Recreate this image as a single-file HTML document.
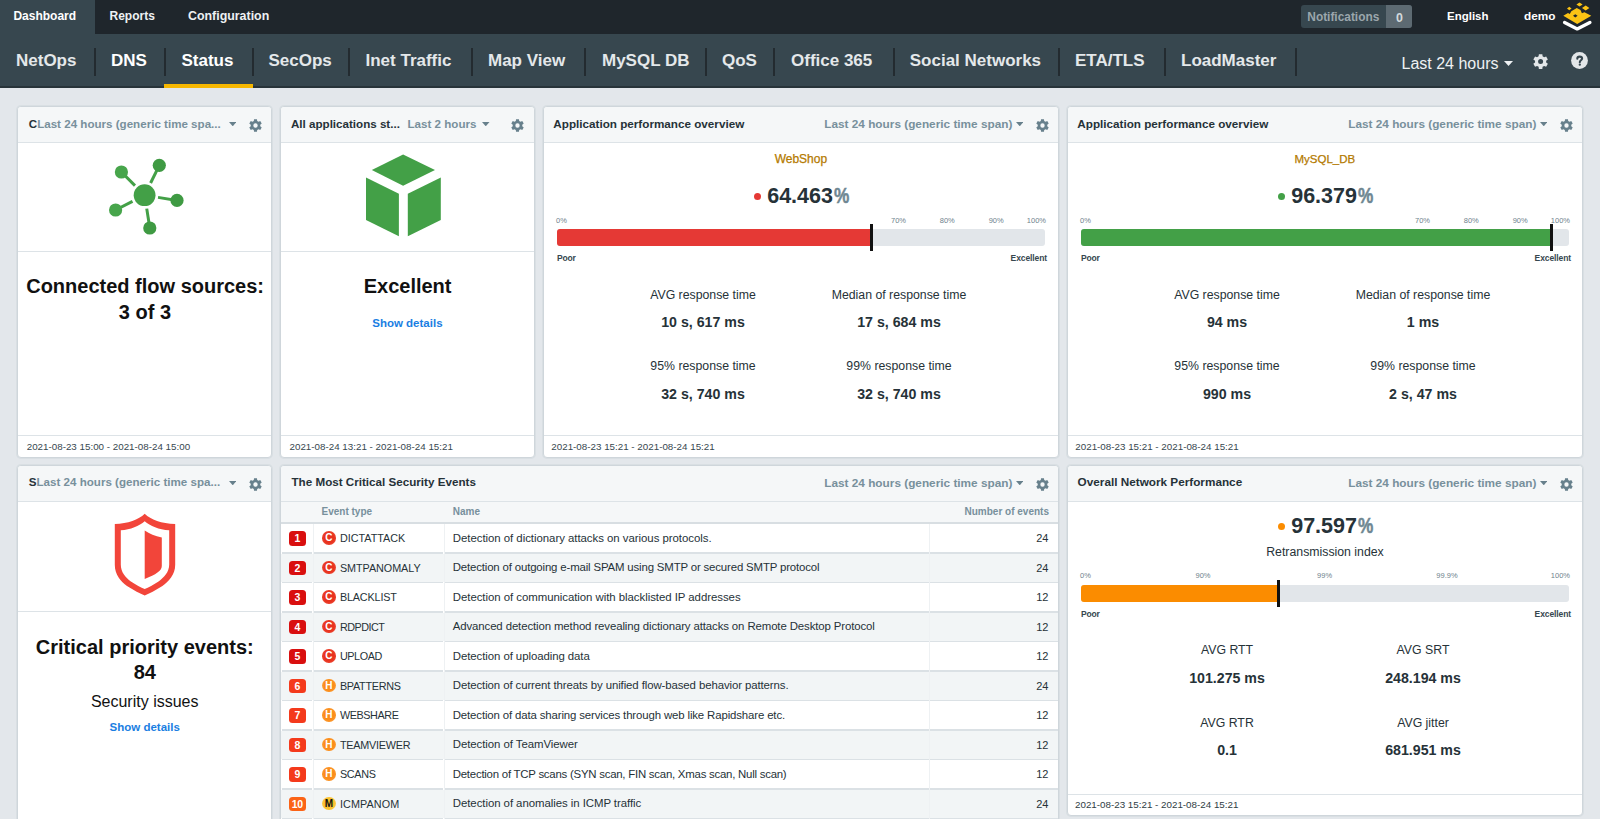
<!DOCTYPE html><html><head><meta charset="utf-8"><style>
html,body{margin:0;padding:0;width:1600px;height:819px;overflow:hidden;background:#e3e7eb;font-family:"Liberation Sans", sans-serif}
.t{position:absolute;white-space:nowrap}
.r{position:absolute}
.p{position:absolute;box-sizing:border-box;border:1px solid #cfd6db;border-radius:4px;background:#fff;overflow:hidden;box-shadow:0 0 0 1px rgba(205,212,218,0.45)}
</style></head><body>
<div class="r" style="left:0px;top:0px;width:1600px;height:34px;background:#1f262c;"></div>
<div class="r" style="left:0px;top:0px;width:95px;height:34px;background:#37474f;"></div>
<div class="t" style="left:13.40px;top:9.85px;font-size:12px;line-height:12px;font-weight:700;color:#ffffff;">Dashboard</div>
<div class="t" style="left:109.50px;top:9.85px;font-size:12px;line-height:12px;font-weight:700;color:#eef1f3;">Reports</div>
<div class="t" style="left:188.00px;top:9.51px;font-size:12.4px;line-height:12.4px;font-weight:700;color:#eef1f3;">Configuration</div>
<div class="r" style="left:1301px;top:5px;width:111px;height:23px;background:#37474f;border-radius:3px;overflow:hidden"><div style="position:absolute;left:85px;top:0;width:26px;height:23px;background:#5d6a72"></div></div>
<div class="t" style="left:1307.30px;top:12.03px;font-size:11.9px;line-height:11.9px;font-weight:700;color:#9ba6ac;">Notifications</div>
<div class="t" style="left:1389.50px;width:20px;text-align:center;top:11.81px;font-size:12.4px;line-height:12.4px;font-weight:700;color:#d3d9dc;">0</div>
<div class="t" style="left:1447.00px;top:11.07px;font-size:11.5px;line-height:11.5px;font-weight:700;color:#ffffff;">English</div>
<div class="t" style="left:1524.00px;top:10.82px;font-size:11.8px;line-height:11.8px;font-weight:700;color:#ffffff;">demo</div>
<svg class="r" style="left:1556px;top:0px" width="44" height="34" viewBox="0 0 44 34">
<path d="M8.6,22.6 L21.2,28.9 L33.9,22.6" fill="none" stroke="#ffffff" stroke-width="3.4" stroke-linejoin="round" stroke-linecap="round"/>
<path fill="#fbc314" fill-rule="evenodd" d="M7.3,15.8 L12.0,13.0 L13.8,14.1 L15.3,11.3 L20.8,7.9 L24.5,9.9 L25.9,13.3 L28.4,12.2 L35.3,15.8 L21.2,23.9 Z M17.0,15.8 L19.3,14.2 L21.6,15.8 L19.3,17.4 Z"/>
<path fill="#fbc314" d="M11.0,8.5 L13.3,6.8 L15.6,8.5 L13.3,10.2 Z M20.4,4.5 L23.5,2.5 L26.6,4.5 L23.5,6.6 Z M26.0,8.0 L29.7,5.4 L33.4,8.0 L29.7,10.6 Z"/>
</svg>
<div class="r" style="left:0px;top:34px;width:1600px;height:54px;background:#37474f;"></div>
<div class="r" style="left:0px;top:86px;width:1600px;height:2px;background:#28343a;"></div>
<div class="t" style="left:16.00px;top:52.12px;font-size:17px;line-height:17px;font-weight:700;color:#e4e8ea;">NetOps</div>
<div class="t" style="left:111.00px;top:52.12px;font-size:17px;line-height:17px;font-weight:700;color:#ffffff;">DNS</div>
<div class="t" style="left:181.50px;top:52.12px;font-size:17px;line-height:17px;font-weight:700;color:#ffffff;">Status</div>
<div class="t" style="left:268.50px;top:52.12px;font-size:17px;line-height:17px;font-weight:700;color:#e4e8ea;">SecOps</div>
<div class="t" style="left:365.50px;top:52.12px;font-size:17px;line-height:17px;font-weight:700;color:#e4e8ea;">Inet Traffic</div>
<div class="t" style="left:488.00px;top:52.12px;font-size:17px;line-height:17px;font-weight:700;color:#e4e8ea;">Map View</div>
<div class="t" style="left:602.00px;top:52.12px;font-size:17px;line-height:17px;font-weight:700;color:#e4e8ea;">MySQL DB</div>
<div class="t" style="left:722.00px;top:52.12px;font-size:17px;line-height:17px;font-weight:700;color:#e4e8ea;">QoS</div>
<div class="t" style="left:791.00px;top:52.12px;font-size:17px;line-height:17px;font-weight:700;color:#e4e8ea;">Office 365</div>
<div class="t" style="left:909.75px;top:52.12px;font-size:17px;line-height:17px;font-weight:700;color:#e4e8ea;">Social Networks</div>
<div class="t" style="left:1075.00px;top:52.12px;font-size:17px;line-height:17px;font-weight:700;color:#e4e8ea;">ETA/TLS</div>
<div class="t" style="left:1181.00px;top:52.12px;font-size:17px;line-height:17px;font-weight:700;color:#e4e8ea;">LoadMaster</div>
<div class="r" style="left:94px;top:48px;width:2px;height:28px;background:#232b30;"></div>
<div class="r" style="left:164px;top:48px;width:2px;height:28px;background:#232b30;"></div>
<div class="r" style="left:252px;top:48px;width:2px;height:28px;background:#232b30;"></div>
<div class="r" style="left:348px;top:48px;width:2px;height:28px;background:#232b30;"></div>
<div class="r" style="left:471px;top:48px;width:2px;height:28px;background:#232b30;"></div>
<div class="r" style="left:584px;top:48px;width:2px;height:28px;background:#232b30;"></div>
<div class="r" style="left:705px;top:48px;width:2px;height:28px;background:#232b30;"></div>
<div class="r" style="left:773px;top:48px;width:2px;height:28px;background:#232b30;"></div>
<div class="r" style="left:893px;top:48px;width:2px;height:28px;background:#232b30;"></div>
<div class="r" style="left:1058px;top:48px;width:2px;height:28px;background:#232b30;"></div>
<div class="r" style="left:1164px;top:48px;width:2px;height:28px;background:#232b30;"></div>
<div class="r" style="left:1295px;top:48px;width:2px;height:28px;background:#232b30;"></div>
<div class="r" style="left:164px;top:84px;width:89px;height:4px;background:#f6b700;"></div>
<div class="t" style="left:1401.50px;top:55.96px;font-size:16px;line-height:16px;font-weight:400;color:#eef1f3;">Last 24 hours</div>
<svg class="r" style="left:1503.50px;top:60.50px" width="9" height="5"><path fill="#eef1f3" d="M0,0 L9,0 L4.5,5 Z"/></svg>
<svg class="r" style="left:1530.90px;top:52.40px" width="19.20" height="19.20"><path fill="#e3e7e9" fill-rule="evenodd" d="M7.62,4.34 L7.87,2.20 L11.33,2.20 L11.58,4.34 L13.17,5.25 L15.14,4.40 L16.87,7.40 L15.15,8.68 L15.15,10.52 L16.87,11.80 L15.14,14.80 L13.17,13.95 L11.58,14.86 L11.33,17.00 L7.87,17.00 L7.62,14.86 L6.03,13.95 L4.06,14.80 L2.33,11.80 L4.05,10.52 L4.05,8.68 L2.33,7.40 L4.06,4.40 L6.03,5.25 Z M7.09,9.60 a2.51,2.51 0 1,0 5.02,0 a2.51,2.51 0 1,0 -5.02,0 Z"/></svg>
<svg class="r" style="left:1570px;top:51px" width="19" height="19" viewBox="0 0 19 19"><circle cx="9.5" cy="9.5" r="8.4" fill="#e3e7e9"/><path d="M7.3,7.7 C7.3,6.3 8.4,5.6 9.7,5.6 C11.1,5.6 12.1,6.4 12.1,7.6 C12.1,9.2 9.8,9.3 9.8,11.2" fill="none" stroke="#37474f" stroke-width="2.1" stroke-linecap="round"/><circle cx="9.8" cy="13.7" r="1.15" fill="#37474f"/></svg>
<div class="p" style="left:17px;top:106px;width:255px;height:352px"></div>
<div class="r" style="left:18px;top:107px;width:253px;height:35px;background:#f5f7f8;border-radius:3px 3px 0 0"></div>
<div class="r" style="left:18px;top:142px;width:253px;height:1px;background:#dde3e7;"></div>
<div class="r" style="left:18px;top:435px;width:253px;height:1px;background:#dde3e7;"></div>
<div class="p" style="left:280px;top:106px;width:255px;height:352px"></div>
<div class="r" style="left:281px;top:107px;width:253px;height:35px;background:#f5f7f8;border-radius:3px 3px 0 0"></div>
<div class="r" style="left:281px;top:142px;width:253px;height:1px;background:#dde3e7;"></div>
<div class="r" style="left:281px;top:435px;width:253px;height:1px;background:#dde3e7;"></div>
<div class="p" style="left:543px;top:106px;width:516px;height:352px"></div>
<div class="r" style="left:544px;top:107px;width:514px;height:35px;background:#f5f7f8;border-radius:3px 3px 0 0"></div>
<div class="r" style="left:544px;top:142px;width:514px;height:1px;background:#dde3e7;"></div>
<div class="r" style="left:544px;top:435px;width:514px;height:1px;background:#dde3e7;"></div>
<div class="p" style="left:1067px;top:106px;width:516px;height:352px"></div>
<div class="r" style="left:1068px;top:107px;width:514px;height:35px;background:#f5f7f8;border-radius:3px 3px 0 0"></div>
<div class="r" style="left:1068px;top:142px;width:514px;height:1px;background:#dde3e7;"></div>
<div class="r" style="left:1068px;top:435px;width:514px;height:1px;background:#dde3e7;"></div>
<div class="p" style="left:17px;top:465px;width:255px;height:360px"></div>
<div class="r" style="left:18px;top:466px;width:253px;height:35px;background:#f5f7f8;border-radius:3px 3px 0 0"></div>
<div class="r" style="left:18px;top:501px;width:253px;height:1px;background:#dde3e7;"></div>
<div class="p" style="left:280px;top:465px;width:779px;height:360px"></div>
<div class="r" style="left:281px;top:466px;width:777px;height:35px;background:#f5f7f8;border-radius:3px 3px 0 0"></div>
<div class="r" style="left:281px;top:501px;width:777px;height:1px;background:#dde3e7;"></div>
<div class="p" style="left:1067px;top:465px;width:516px;height:351px"></div>
<div class="r" style="left:1068px;top:466px;width:514px;height:35px;background:#f5f7f8;border-radius:3px 3px 0 0"></div>
<div class="r" style="left:1068px;top:501px;width:514px;height:1px;background:#dde3e7;"></div>
<div class="r" style="left:1068px;top:794px;width:514px;height:1px;background:#dde3e7;"></div>
<div class="t" style="left:28.75px;top:117.99px;font-size:11.6px;line-height:11.6px;font-weight:700;color:#78909c;"><span style="color:#263238">C</span>Last 24 hours (generic time spa...</div>
<div class="t" style="left:-74.60px;width:300px;text-align:right;top:119.02px;font-size:11.8px;line-height:11.8px;font-weight:700;color:#78909c;"></div>
<svg class="r" style="left:228.75px;top:121.85px" width="7.5" height="4.3"><path fill="#67808c" d="M0,0 L7.5,0 L3.75,4.3 Z"/></svg>
<svg class="r" style="left:247.10px;top:116.70px" width="17.00" height="17.00"><path fill="#67808c" fill-rule="evenodd" d="M6.81,4.00 L7.02,2.17 L9.98,2.17 L10.19,4.00 L11.55,4.78 L13.24,4.05 L14.72,6.62 L13.25,7.72 L13.25,9.28 L14.72,10.38 L13.24,12.95 L11.55,12.22 L10.19,13.00 L9.98,14.83 L7.02,14.83 L6.81,13.00 L5.45,12.22 L3.76,12.95 L2.28,10.38 L3.75,9.28 L3.75,7.72 L2.28,6.62 L3.76,4.05 L5.45,4.78 Z M6.36,8.50 a2.15,2.15 0 1,0 4.29,0 a2.15,2.15 0 1,0 -4.29,0 Z"/></svg>
<div class="r" style="left:18px;top:251px;width:253px;height:1px;background:#dde3e7;"></div>
<svg class="r" style="left:100px;top:150px" width="90" height="90" viewBox="100 150 90 90">
<g stroke="#43a047" stroke-width="3" stroke-linecap="butt">
<line x1="134.98" y1="185.58" x2="121.40" y2="172.00"/>
<line x1="150.60" y1="183.00" x2="159.30" y2="165.30"/>
<line x1="158.03" y1="197.36" x2="177.00" y2="200.40"/>
<line x1="146.73" y1="208.63" x2="149.80" y2="228.00"/>
<line x1="132.49" y1="201.38" x2="115.60" y2="210.00"/>
</g>
<circle cx="144.6" cy="195.2" r="10.9" fill="#43a047"/>
<circle cx="121.4" cy="172.0" r="6.6" fill="#47a54b"/>
<circle cx="159.3" cy="165.3" r="6.6" fill="#3f9a43"/>
<circle cx="177.0" cy="200.4" r="6.6" fill="#3f9a43"/>
<circle cx="149.8" cy="228.0" r="6.6" fill="#3f9a43"/>
<circle cx="115.6" cy="210.0" r="6.6" fill="#47a54b"/>
</svg>
<div class="t" style="left:20.10px;width:250px;text-align:center;top:276.08px;font-size:20px;line-height:20px;font-weight:700;color:#111111;">Connected flow sources:</div>
<div class="t" style="left:19.90px;width:250px;text-align:center;top:301.58px;font-size:20px;line-height:20px;font-weight:700;color:#111111;">3 of 3</div>
<div class="t" style="left:26.70px;top:442.01px;font-size:9.8px;line-height:9.8px;font-weight:400;color:#37474f;">2021-08-23 15:00 - 2021-08-24 15:00</div>
<div class="t" style="left:291.00px;top:117.99px;font-size:11.6px;line-height:11.6px;font-weight:700;color:#263238;">All applications st...</div>
<div class="t" style="left:407.50px;top:117.99px;font-size:11.6px;line-height:11.6px;font-weight:700;color:#78909c;">Last 2 hours</div>
<svg class="r" style="left:482.15px;top:121.85px" width="7.5" height="4.3"><path fill="#67808c" d="M0,0 L7.5,0 L3.75,4.3 Z"/></svg>
<svg class="r" style="left:509.30px;top:116.70px" width="17.00" height="17.00"><path fill="#67808c" fill-rule="evenodd" d="M6.81,4.00 L7.02,2.17 L9.98,2.17 L10.19,4.00 L11.55,4.78 L13.24,4.05 L14.72,6.62 L13.25,7.72 L13.25,9.28 L14.72,10.38 L13.24,12.95 L11.55,12.22 L10.19,13.00 L9.98,14.83 L7.02,14.83 L6.81,13.00 L5.45,12.22 L3.76,12.95 L2.28,10.38 L3.75,9.28 L3.75,7.72 L2.28,6.62 L3.76,4.05 L5.45,4.78 Z M6.36,8.50 a2.15,2.15 0 1,0 4.29,0 a2.15,2.15 0 1,0 -4.29,0 Z"/></svg>
<div class="r" style="left:281px;top:251px;width:253px;height:1px;background:#dde3e7;"></div>
<svg class="r" style="left:360px;top:150px" width="90" height="90" viewBox="360 150 90 90">
<g fill="#43a047">
<polygon points="403.1,154.4 435,170 403.1,185.7 371.8,170"/>
<polygon points="366,177.6 398.9,193.8 398.9,236.2 366,219.9"/>
<polygon points="407.8,193.8 440.8,177.6 440.8,219.9 407.8,236.2"/>
</g></svg>
<div class="t" style="left:307.60px;width:200px;text-align:center;top:276.38px;font-size:20px;line-height:20px;font-weight:700;color:#111111;">Excellent</div>
<div class="t" style="left:307.40px;width:200px;text-align:center;top:318.27px;font-size:11.5px;line-height:11.5px;font-weight:700;color:#1a7ee2;">Show details</div>
<div class="t" style="left:289.50px;top:442.01px;font-size:9.8px;line-height:9.8px;font-weight:400;color:#37474f;">2021-08-24 13:21 - 2021-08-24 15:21</div>
<div class="t" style="left:553.30px;top:117.90px;font-size:11.7px;line-height:11.7px;font-weight:700;color:#263238;">Application performance overview</div>
<div class="t" style="left:712.40px;width:300px;text-align:right;top:119.02px;font-size:11.8px;line-height:11.8px;font-weight:700;color:#78909c;">Last 24 hours (generic time span)</div>
<svg class="r" style="left:1015.75px;top:121.85px" width="7.5" height="4.3"><path fill="#67808c" d="M0,0 L7.5,0 L3.75,4.3 Z"/></svg>
<svg class="r" style="left:1034.10px;top:116.70px" width="17.00" height="17.00"><path fill="#67808c" fill-rule="evenodd" d="M6.81,4.00 L7.02,2.17 L9.98,2.17 L10.19,4.00 L11.55,4.78 L13.24,4.05 L14.72,6.62 L13.25,7.72 L13.25,9.28 L14.72,10.38 L13.24,12.95 L11.55,12.22 L10.19,13.00 L9.98,14.83 L7.02,14.83 L6.81,13.00 L5.45,12.22 L3.76,12.95 L2.28,10.38 L3.75,9.28 L3.75,7.72 L2.28,6.62 L3.76,4.05 L5.45,4.78 Z M6.36,8.50 a2.15,2.15 0 1,0 4.29,0 a2.15,2.15 0 1,0 -4.29,0 Z"/></svg>
<div class="t" style="left:700.90px;width:200px;text-align:center;top:153.25px;font-size:12px;line-height:12px;font-weight:400;color:#b47a00;-webkit-text-stroke:0.25px #b47a00">WebShop</div>
<div class="r" style="left:753.5px;top:192.5px;width:7px;height:7px;border-radius:50%;background:#e53935"></div>
<div class="t" style="left:767.20px;top:186.31px;font-size:21.5px;line-height:21.5px;font-weight:700;color:#263238;">64.463<span style="font-weight:700;color:#6f8792;display:inline-block;transform:scaleX(0.8);transform-origin:0 0;-webkit-text-stroke:0.5px #6f8792;margin-left:1px">%</span></div>
<div class="t" style="left:556.00px;top:217.16px;font-size:7.5px;line-height:7.5px;font-weight:400;color:#6e828c;">0%</div>
<div class="t" style="left:878.50px;width:40px;text-align:center;top:217.16px;font-size:7.5px;line-height:7.5px;font-weight:400;color:#6e828c;">70%</div>
<div class="t" style="left:927.30px;width:40px;text-align:center;top:217.16px;font-size:7.5px;line-height:7.5px;font-weight:400;color:#6e828c;">80%</div>
<div class="t" style="left:976.20px;width:40px;text-align:center;top:217.16px;font-size:7.5px;line-height:7.5px;font-weight:400;color:#6e828c;">90%</div>
<div class="t" style="left:1006.00px;width:40px;text-align:right;top:217.16px;font-size:7.5px;line-height:7.5px;font-weight:400;color:#6e828c;">100%</div>
<div class="r" style="left:557px;top:229px;width:488px;height:17px;border-radius:3px;background:#e2e6ea;overflow:hidden"><div style="position:absolute;left:0;top:0;bottom:0;width:314.20000000000005px;background:#e53935"></div></div>
<div class="r" style="left:869.7px;top:224px;width:3px;height:27px;background:#111111;"></div>
<div class="t" style="left:556.90px;top:253.71px;font-size:8.5px;line-height:8.5px;font-weight:700;color:#37474f;letter-spacing:-0.15px">Poor</div>
<div class="t" style="left:967.00px;width:80px;text-align:right;top:253.81px;font-size:8.5px;line-height:8.5px;font-weight:700;color:#37474f;letter-spacing:-0.1px">Excellent</div>
<div class="t" style="left:608.00px;width:190px;text-align:center;top:288.69px;font-size:12.3px;line-height:12.3px;font-weight:400;color:#263238;">AVG response time</div>
<div class="t" style="left:804.00px;width:190px;text-align:center;top:288.69px;font-size:12.3px;line-height:12.3px;font-weight:400;color:#263238;">Median of response time</div>
<div class="t" style="left:608.00px;width:190px;text-align:center;top:315.29px;font-size:14.2px;line-height:14.2px;font-weight:700;color:#263238;">10 s, 617 ms</div>
<div class="t" style="left:804.00px;width:190px;text-align:center;top:315.29px;font-size:14.2px;line-height:14.2px;font-weight:700;color:#263238;">17 s, 684 ms</div>
<div class="t" style="left:608.00px;width:190px;text-align:center;top:359.99px;font-size:12.3px;line-height:12.3px;font-weight:400;color:#263238;">95% response time</div>
<div class="t" style="left:804.00px;width:190px;text-align:center;top:359.99px;font-size:12.3px;line-height:12.3px;font-weight:400;color:#263238;">99% response time</div>
<div class="t" style="left:608.00px;width:190px;text-align:center;top:387.19px;font-size:14.2px;line-height:14.2px;font-weight:700;color:#263238;">32 s, 740 ms</div>
<div class="t" style="left:804.00px;width:190px;text-align:center;top:387.19px;font-size:14.2px;line-height:14.2px;font-weight:700;color:#263238;">32 s, 740 ms</div>
<div class="t" style="left:551.30px;top:442.01px;font-size:9.8px;line-height:9.8px;font-weight:400;color:#37474f;">2021-08-23 15:21 - 2021-08-24 15:21</div>
<div class="t" style="left:1077.30px;top:117.90px;font-size:11.7px;line-height:11.7px;font-weight:700;color:#263238;">Application performance overview</div>
<div class="t" style="left:1236.40px;width:300px;text-align:right;top:119.02px;font-size:11.8px;line-height:11.8px;font-weight:700;color:#78909c;">Last 24 hours (generic time span)</div>
<svg class="r" style="left:1539.75px;top:121.85px" width="7.5" height="4.3"><path fill="#67808c" d="M0,0 L7.5,0 L3.75,4.3 Z"/></svg>
<svg class="r" style="left:1558.10px;top:116.70px" width="17.00" height="17.00"><path fill="#67808c" fill-rule="evenodd" d="M6.81,4.00 L7.02,2.17 L9.98,2.17 L10.19,4.00 L11.55,4.78 L13.24,4.05 L14.72,6.62 L13.25,7.72 L13.25,9.28 L14.72,10.38 L13.24,12.95 L11.55,12.22 L10.19,13.00 L9.98,14.83 L7.02,14.83 L6.81,13.00 L5.45,12.22 L3.76,12.95 L2.28,10.38 L3.75,9.28 L3.75,7.72 L2.28,6.62 L3.76,4.05 L5.45,4.78 Z M6.36,8.50 a2.15,2.15 0 1,0 4.29,0 a2.15,2.15 0 1,0 -4.29,0 Z"/></svg>
<div class="t" style="left:1224.90px;width:200px;text-align:center;top:153.67px;font-size:11.5px;line-height:11.5px;font-weight:400;color:#b47a00;-webkit-text-stroke:0.25px #b47a00">MySQL_DB</div>
<div class="r" style="left:1277.5px;top:192.5px;width:7px;height:7px;border-radius:50%;background:#43a047"></div>
<div class="t" style="left:1291.20px;top:186.31px;font-size:21.5px;line-height:21.5px;font-weight:700;color:#263238;">96.379<span style="font-weight:700;color:#6f8792;display:inline-block;transform:scaleX(0.8);transform-origin:0 0;-webkit-text-stroke:0.5px #6f8792;margin-left:1px">%</span></div>
<div class="t" style="left:1080.00px;top:217.16px;font-size:7.5px;line-height:7.5px;font-weight:400;color:#6e828c;">0%</div>
<div class="t" style="left:1402.50px;width:40px;text-align:center;top:217.16px;font-size:7.5px;line-height:7.5px;font-weight:400;color:#6e828c;">70%</div>
<div class="t" style="left:1451.30px;width:40px;text-align:center;top:217.16px;font-size:7.5px;line-height:7.5px;font-weight:400;color:#6e828c;">80%</div>
<div class="t" style="left:1500.20px;width:40px;text-align:center;top:217.16px;font-size:7.5px;line-height:7.5px;font-weight:400;color:#6e828c;">90%</div>
<div class="t" style="left:1530.00px;width:40px;text-align:right;top:217.16px;font-size:7.5px;line-height:7.5px;font-weight:400;color:#6e828c;">100%</div>
<div class="r" style="left:1081px;top:229px;width:488px;height:17px;border-radius:3px;background:#e2e6ea;overflow:hidden"><div style="position:absolute;left:0;top:0;bottom:0;width:470px;background:#43a047"></div></div>
<div class="r" style="left:1549.5px;top:224px;width:3px;height:27px;background:#111111;"></div>
<div class="t" style="left:1080.90px;top:253.71px;font-size:8.5px;line-height:8.5px;font-weight:700;color:#37474f;letter-spacing:-0.15px">Poor</div>
<div class="t" style="left:1491.00px;width:80px;text-align:right;top:253.81px;font-size:8.5px;line-height:8.5px;font-weight:700;color:#37474f;letter-spacing:-0.1px">Excellent</div>
<div class="t" style="left:1132.00px;width:190px;text-align:center;top:288.69px;font-size:12.3px;line-height:12.3px;font-weight:400;color:#263238;">AVG response time</div>
<div class="t" style="left:1328.00px;width:190px;text-align:center;top:288.69px;font-size:12.3px;line-height:12.3px;font-weight:400;color:#263238;">Median of response time</div>
<div class="t" style="left:1132.00px;width:190px;text-align:center;top:315.29px;font-size:14.2px;line-height:14.2px;font-weight:700;color:#263238;">94 ms</div>
<div class="t" style="left:1328.00px;width:190px;text-align:center;top:315.29px;font-size:14.2px;line-height:14.2px;font-weight:700;color:#263238;">1 ms</div>
<div class="t" style="left:1132.00px;width:190px;text-align:center;top:359.99px;font-size:12.3px;line-height:12.3px;font-weight:400;color:#263238;">95% response time</div>
<div class="t" style="left:1328.00px;width:190px;text-align:center;top:359.99px;font-size:12.3px;line-height:12.3px;font-weight:400;color:#263238;">99% response time</div>
<div class="t" style="left:1132.00px;width:190px;text-align:center;top:387.19px;font-size:14.2px;line-height:14.2px;font-weight:700;color:#263238;">990 ms</div>
<div class="t" style="left:1328.00px;width:190px;text-align:center;top:387.19px;font-size:14.2px;line-height:14.2px;font-weight:700;color:#263238;">2 s, 47 ms</div>
<div class="t" style="left:1075.30px;top:442.01px;font-size:9.8px;line-height:9.8px;font-weight:400;color:#37474f;">2021-08-23 15:21 - 2021-08-24 15:21</div>
<div class="t" style="left:28.75px;top:476.09px;font-size:11.6px;line-height:11.6px;font-weight:700;color:#78909c;"><span style="color:#263238">S</span>Last 24 hours (generic time spa...</div>
<div class="t" style="left:-74.60px;width:300px;text-align:right;top:478.02px;font-size:11.8px;line-height:11.8px;font-weight:700;color:#78909c;"></div>
<svg class="r" style="left:228.75px;top:480.85px" width="7.5" height="4.3"><path fill="#67808c" d="M0,0 L7.5,0 L3.75,4.3 Z"/></svg>
<svg class="r" style="left:247.10px;top:475.70px" width="17.00" height="17.00"><path fill="#67808c" fill-rule="evenodd" d="M6.81,4.00 L7.02,2.17 L9.98,2.17 L10.19,4.00 L11.55,4.78 L13.24,4.05 L14.72,6.62 L13.25,7.72 L13.25,9.28 L14.72,10.38 L13.24,12.95 L11.55,12.22 L10.19,13.00 L9.98,14.83 L7.02,14.83 L6.81,13.00 L5.45,12.22 L3.76,12.95 L2.28,10.38 L3.75,9.28 L3.75,7.72 L2.28,6.62 L3.76,4.05 L5.45,4.78 Z M6.36,8.50 a2.15,2.15 0 1,0 4.29,0 a2.15,2.15 0 1,0 -4.29,0 Z"/></svg>
<div class="r" style="left:18px;top:611px;width:253px;height:1px;background:#dde3e7;"></div>
<svg class="r" style="left:105px;top:505px" width="80" height="100" viewBox="105 505 80 100">
<path fill="#f2453a" fill-rule="evenodd" d="M144.7,513.8 C138.5,519.8 128,523.9 114.8,523.9 L114.8,564.8 C114.8,575 121,581.5 127,586 C134,590.5 140,593.5 144.7,595.4 C149.4,593.5 155.4,590.5 162.4,586 C168.4,581.5 175.2,575 175.2,564.8 L175.2,523.9 C161.4,523.9 150.9,519.8 144.7,513.8 Z
M144.7,521.2 C139.3,526 130.5,529.6 120.8,530.2 L120.8,564.5 C120.8,572.2 125.5,577.5 130.5,581.2 C136,585 141,587.5 144.7,589 C148.4,587.5 153.4,585 158.9,581.2 C163.9,577.5 169.2,572.2 169.2,564.5 L169.2,530.2 C158.9,529.6 150.1,526 144.7,521.2 Z"/>
<path fill="#f2453a" d="M144.7,530.6 C149.5,533.8 155,536.3 161.8,537.4 L161.8,566 C161.8,570.8 156,574.5 144.7,578.9 Z"/>
</svg>
<div class="t" style="left:19.75px;width:250px;text-align:center;top:637.38px;font-size:20px;line-height:20px;font-weight:700;color:#111111;">Critical priority events:</div>
<div class="t" style="left:19.75px;width:250px;text-align:center;top:662.38px;font-size:20px;line-height:20px;font-weight:700;color:#111111;">84</div>
<div class="t" style="left:19.70px;width:250px;text-align:center;top:694.26px;font-size:16px;line-height:16px;font-weight:400;color:#111111;">Security issues</div>
<div class="t" style="left:44.70px;width:200px;text-align:center;top:721.77px;font-size:11.5px;line-height:11.5px;font-weight:700;color:#1a7ee2;">Show details</div>
<div class="t" style="left:291.50px;top:476.44px;font-size:11.65px;line-height:11.65px;font-weight:700;color:#263238;">The Most Critical Security Events</div>
<div class="t" style="left:712.40px;width:300px;text-align:right;top:478.02px;font-size:11.8px;line-height:11.8px;font-weight:700;color:#78909c;">Last 24 hours (generic time span)</div>
<svg class="r" style="left:1015.75px;top:480.85px" width="7.5" height="4.3"><path fill="#67808c" d="M0,0 L7.5,0 L3.75,4.3 Z"/></svg>
<svg class="r" style="left:1034.10px;top:475.70px" width="17.00" height="17.00"><path fill="#67808c" fill-rule="evenodd" d="M6.81,4.00 L7.02,2.17 L9.98,2.17 L10.19,4.00 L11.55,4.78 L13.24,4.05 L14.72,6.62 L13.25,7.72 L13.25,9.28 L14.72,10.38 L13.24,12.95 L11.55,12.22 L10.19,13.00 L9.98,14.83 L7.02,14.83 L6.81,13.00 L5.45,12.22 L3.76,12.95 L2.28,10.38 L3.75,9.28 L3.75,7.72 L2.28,6.62 L3.76,4.05 L5.45,4.78 Z M6.36,8.50 a2.15,2.15 0 1,0 4.29,0 a2.15,2.15 0 1,0 -4.29,0 Z"/></svg>
<div class="r" style="left:281px;top:502px;width:777px;height:21px;background:#f5f7f8;"></div>
<div class="r" style="left:281px;top:522px;width:777px;height:1.5px;background:#d8dee2;"></div>
<div class="t" style="left:321.50px;top:506.94px;font-size:10px;line-height:10px;font-weight:700;color:#78909c;">Event type</div>
<div class="t" style="left:452.75px;top:506.94px;font-size:10px;line-height:10px;font-weight:700;color:#78909c;">Name</div>
<div class="t" style="left:899.00px;width:150px;text-align:right;top:506.94px;font-size:10px;line-height:10px;font-weight:700;color:#78909c;">Number of events</div>
<div class="r" style="left:282px;top:552.00px;width:30px;height:1.5px;background:#dbe1e5"></div>
<div class="r" style="left:313px;top:552.00px;width:130px;height:1.5px;background:#dbe1e5"></div>
<div class="r" style="left:444.5px;top:552.00px;width:484px;height:1.5px;background:#dbe1e5"></div>
<div class="r" style="left:929.5px;top:552.00px;width:128.5px;height:1.5px;background:#dbe1e5"></div>
<div class="r" style="left:289px;top:531.25px;width:16.5px;height:14.5px;border-radius:3.5px;background:#d90f0f;color:#fff;font-weight:700;font-size:10.5px;line-height:14.5px;text-align:center;letter-spacing:-0.3px">1</div>
<div class="r" style="left:322.2px;top:531.25px;width:13.5px;height:13.5px;border-radius:50%;background:radial-gradient(circle, #e8321e 50%, #f2604c 100%);color:#fff;font-weight:700;font-size:10px;line-height:14px;text-align:center">C</div>
<div class="t" style="left:339.90px;top:533.36px;font-size:10.8px;line-height:10.8px;font-weight:400;color:#263238;letter-spacing:0.000px">DICTATTACK</div>
<div class="t" style="left:452.75px;top:532.83px;font-size:11.43px;line-height:11.43px;font-weight:400;color:#263238;letter-spacing:-0.040px">Detection of dictionary attacks on various protocols.</div>
<div class="t" style="left:988.40px;width:60px;text-align:right;top:533.19px;font-size:11px;line-height:11px;font-weight:400;color:#263238;">24</div>
<div class="r" style="left:281px;top:554.0px;width:777px;height:28px;background:#f2f5f6;"></div>
<div class="r" style="left:282px;top:581.50px;width:30px;height:1.5px;background:#dbe1e5"></div>
<div class="r" style="left:313px;top:581.50px;width:130px;height:1.5px;background:#dbe1e5"></div>
<div class="r" style="left:444.5px;top:581.50px;width:484px;height:1.5px;background:#dbe1e5"></div>
<div class="r" style="left:929.5px;top:581.50px;width:128.5px;height:1.5px;background:#dbe1e5"></div>
<div class="r" style="left:289px;top:560.75px;width:16.5px;height:14.5px;border-radius:3.5px;background:#d90f0f;color:#fff;font-weight:700;font-size:10.5px;line-height:14.5px;text-align:center;letter-spacing:-0.3px">2</div>
<div class="r" style="left:322.2px;top:560.75px;width:13.5px;height:13.5px;border-radius:50%;background:radial-gradient(circle, #e8321e 50%, #f2604c 100%);color:#fff;font-weight:700;font-size:10px;line-height:14px;text-align:center">C</div>
<div class="t" style="left:339.90px;top:562.86px;font-size:10.8px;line-height:10.8px;font-weight:400;color:#263238;letter-spacing:-0.050px">SMTPANOMALY</div>
<div class="t" style="left:452.75px;top:562.33px;font-size:11.43px;line-height:11.43px;font-weight:400;color:#263238;letter-spacing:-0.162px">Detection of outgoing e-mail SPAM using SMTP or secured SMTP protocol</div>
<div class="t" style="left:988.40px;width:60px;text-align:right;top:562.69px;font-size:11px;line-height:11px;font-weight:400;color:#263238;">24</div>
<div class="r" style="left:282px;top:611.00px;width:30px;height:1.5px;background:#dbe1e5"></div>
<div class="r" style="left:313px;top:611.00px;width:130px;height:1.5px;background:#dbe1e5"></div>
<div class="r" style="left:444.5px;top:611.00px;width:484px;height:1.5px;background:#dbe1e5"></div>
<div class="r" style="left:929.5px;top:611.00px;width:128.5px;height:1.5px;background:#dbe1e5"></div>
<div class="r" style="left:289px;top:590.25px;width:16.5px;height:14.5px;border-radius:3.5px;background:#d90f0f;color:#fff;font-weight:700;font-size:10.5px;line-height:14.5px;text-align:center;letter-spacing:-0.3px">3</div>
<div class="r" style="left:322.2px;top:590.25px;width:13.5px;height:13.5px;border-radius:50%;background:radial-gradient(circle, #e8321e 50%, #f2604c 100%);color:#fff;font-weight:700;font-size:10px;line-height:14px;text-align:center">C</div>
<div class="t" style="left:339.90px;top:592.36px;font-size:10.8px;line-height:10.8px;font-weight:400;color:#263238;letter-spacing:-0.150px">BLACKLIST</div>
<div class="t" style="left:452.75px;top:591.83px;font-size:11.43px;line-height:11.43px;font-weight:400;color:#263238;letter-spacing:-0.049px">Detection of communication with blacklisted IP addresses</div>
<div class="t" style="left:988.40px;width:60px;text-align:right;top:592.19px;font-size:11px;line-height:11px;font-weight:400;color:#263238;">12</div>
<div class="r" style="left:281px;top:613.0px;width:777px;height:28px;background:#f2f5f6;"></div>
<div class="r" style="left:282px;top:640.50px;width:30px;height:1.5px;background:#dbe1e5"></div>
<div class="r" style="left:313px;top:640.50px;width:130px;height:1.5px;background:#dbe1e5"></div>
<div class="r" style="left:444.5px;top:640.50px;width:484px;height:1.5px;background:#dbe1e5"></div>
<div class="r" style="left:929.5px;top:640.50px;width:128.5px;height:1.5px;background:#dbe1e5"></div>
<div class="r" style="left:289px;top:619.75px;width:16.5px;height:14.5px;border-radius:3.5px;background:#d90f0f;color:#fff;font-weight:700;font-size:10.5px;line-height:14.5px;text-align:center;letter-spacing:-0.3px">4</div>
<div class="r" style="left:322.2px;top:619.75px;width:13.5px;height:13.5px;border-radius:50%;background:radial-gradient(circle, #e8321e 50%, #f2604c 100%);color:#fff;font-weight:700;font-size:10px;line-height:14px;text-align:center">C</div>
<div class="t" style="left:339.90px;top:621.86px;font-size:10.8px;line-height:10.8px;font-weight:400;color:#263238;letter-spacing:-0.500px">RDPDICT</div>
<div class="t" style="left:452.75px;top:621.33px;font-size:11.43px;line-height:11.43px;font-weight:400;color:#263238;letter-spacing:-0.120px">Advanced detection method revealing dictionary attacks on Remote Desktop Protocol</div>
<div class="t" style="left:988.40px;width:60px;text-align:right;top:621.69px;font-size:11px;line-height:11px;font-weight:400;color:#263238;">12</div>
<div class="r" style="left:282px;top:670.00px;width:30px;height:1.5px;background:#dbe1e5"></div>
<div class="r" style="left:313px;top:670.00px;width:130px;height:1.5px;background:#dbe1e5"></div>
<div class="r" style="left:444.5px;top:670.00px;width:484px;height:1.5px;background:#dbe1e5"></div>
<div class="r" style="left:929.5px;top:670.00px;width:128.5px;height:1.5px;background:#dbe1e5"></div>
<div class="r" style="left:289px;top:649.25px;width:16.5px;height:14.5px;border-radius:3.5px;background:#d90f0f;color:#fff;font-weight:700;font-size:10.5px;line-height:14.5px;text-align:center;letter-spacing:-0.3px">5</div>
<div class="r" style="left:322.2px;top:649.25px;width:13.5px;height:13.5px;border-radius:50%;background:radial-gradient(circle, #e8321e 50%, #f2604c 100%);color:#fff;font-weight:700;font-size:10px;line-height:14px;text-align:center">C</div>
<div class="t" style="left:339.90px;top:651.36px;font-size:10.8px;line-height:10.8px;font-weight:400;color:#263238;letter-spacing:-0.400px">UPLOAD</div>
<div class="t" style="left:452.75px;top:650.83px;font-size:11.43px;line-height:11.43px;font-weight:400;color:#263238;letter-spacing:-0.077px">Detection of uploading data</div>
<div class="t" style="left:988.40px;width:60px;text-align:right;top:651.19px;font-size:11px;line-height:11px;font-weight:400;color:#263238;">12</div>
<div class="r" style="left:281px;top:672.0px;width:777px;height:28px;background:#f2f5f6;"></div>
<div class="r" style="left:282px;top:699.50px;width:30px;height:1.5px;background:#dbe1e5"></div>
<div class="r" style="left:313px;top:699.50px;width:130px;height:1.5px;background:#dbe1e5"></div>
<div class="r" style="left:444.5px;top:699.50px;width:484px;height:1.5px;background:#dbe1e5"></div>
<div class="r" style="left:929.5px;top:699.50px;width:128.5px;height:1.5px;background:#dbe1e5"></div>
<div class="r" style="left:289px;top:678.75px;width:16.5px;height:14.5px;border-radius:3.5px;background:#f43a1c;color:#fff;font-weight:700;font-size:10.5px;line-height:14.5px;text-align:center;letter-spacing:-0.3px">6</div>
<div class="r" style="left:322.2px;top:678.75px;width:13.5px;height:13.5px;border-radius:50%;background:radial-gradient(circle, #fb8c1a 50%, #fdae52 100%);color:#fff;font-weight:700;font-size:10px;line-height:14px;text-align:center">H</div>
<div class="t" style="left:339.90px;top:680.86px;font-size:10.8px;line-height:10.8px;font-weight:400;color:#263238;letter-spacing:-0.275px">BPATTERNS</div>
<div class="t" style="left:452.75px;top:680.33px;font-size:11.43px;line-height:11.43px;font-weight:400;color:#263238;letter-spacing:-0.103px">Detection of current threats by unified flow-based behavior patterns.</div>
<div class="t" style="left:988.40px;width:60px;text-align:right;top:680.69px;font-size:11px;line-height:11px;font-weight:400;color:#263238;">24</div>
<div class="r" style="left:282px;top:729.00px;width:30px;height:1.5px;background:#dbe1e5"></div>
<div class="r" style="left:313px;top:729.00px;width:130px;height:1.5px;background:#dbe1e5"></div>
<div class="r" style="left:444.5px;top:729.00px;width:484px;height:1.5px;background:#dbe1e5"></div>
<div class="r" style="left:929.5px;top:729.00px;width:128.5px;height:1.5px;background:#dbe1e5"></div>
<div class="r" style="left:289px;top:708.25px;width:16.5px;height:14.5px;border-radius:3.5px;background:#f43a1c;color:#fff;font-weight:700;font-size:10.5px;line-height:14.5px;text-align:center;letter-spacing:-0.3px">7</div>
<div class="r" style="left:322.2px;top:708.25px;width:13.5px;height:13.5px;border-radius:50%;background:radial-gradient(circle, #fb8c1a 50%, #fdae52 100%);color:#fff;font-weight:700;font-size:10px;line-height:14px;text-align:center">H</div>
<div class="t" style="left:339.90px;top:710.36px;font-size:10.8px;line-height:10.8px;font-weight:400;color:#263238;letter-spacing:-0.400px">WEBSHARE</div>
<div class="t" style="left:452.75px;top:709.83px;font-size:11.43px;line-height:11.43px;font-weight:400;color:#263238;letter-spacing:-0.139px">Detection of data sharing services through web like Rapidshare etc.</div>
<div class="t" style="left:988.40px;width:60px;text-align:right;top:710.19px;font-size:11px;line-height:11px;font-weight:400;color:#263238;">12</div>
<div class="r" style="left:281px;top:731.0px;width:777px;height:28px;background:#f2f5f6;"></div>
<div class="r" style="left:282px;top:758.50px;width:30px;height:1.5px;background:#dbe1e5"></div>
<div class="r" style="left:313px;top:758.50px;width:130px;height:1.5px;background:#dbe1e5"></div>
<div class="r" style="left:444.5px;top:758.50px;width:484px;height:1.5px;background:#dbe1e5"></div>
<div class="r" style="left:929.5px;top:758.50px;width:128.5px;height:1.5px;background:#dbe1e5"></div>
<div class="r" style="left:289px;top:737.75px;width:16.5px;height:14.5px;border-radius:3.5px;background:#f43a1c;color:#fff;font-weight:700;font-size:10.5px;line-height:14.5px;text-align:center;letter-spacing:-0.3px">8</div>
<div class="r" style="left:322.2px;top:737.75px;width:13.5px;height:13.5px;border-radius:50%;background:radial-gradient(circle, #fb8c1a 50%, #fdae52 100%);color:#fff;font-weight:700;font-size:10px;line-height:14px;text-align:center">H</div>
<div class="t" style="left:339.90px;top:739.86px;font-size:10.8px;line-height:10.8px;font-weight:400;color:#263238;letter-spacing:-0.222px">TEAMVIEWER</div>
<div class="t" style="left:452.75px;top:739.33px;font-size:11.43px;line-height:11.43px;font-weight:400;color:#263238;letter-spacing:-0.068px">Detection of TeamViewer</div>
<div class="t" style="left:988.40px;width:60px;text-align:right;top:739.69px;font-size:11px;line-height:11px;font-weight:400;color:#263238;">12</div>
<div class="r" style="left:282px;top:788.00px;width:30px;height:1.5px;background:#dbe1e5"></div>
<div class="r" style="left:313px;top:788.00px;width:130px;height:1.5px;background:#dbe1e5"></div>
<div class="r" style="left:444.5px;top:788.00px;width:484px;height:1.5px;background:#dbe1e5"></div>
<div class="r" style="left:929.5px;top:788.00px;width:128.5px;height:1.5px;background:#dbe1e5"></div>
<div class="r" style="left:289px;top:767.25px;width:16.5px;height:14.5px;border-radius:3.5px;background:#f43a1c;color:#fff;font-weight:700;font-size:10.5px;line-height:14.5px;text-align:center;letter-spacing:-0.3px">9</div>
<div class="r" style="left:322.2px;top:767.25px;width:13.5px;height:13.5px;border-radius:50%;background:radial-gradient(circle, #fb8c1a 50%, #fdae52 100%);color:#fff;font-weight:700;font-size:10px;line-height:14px;text-align:center">H</div>
<div class="t" style="left:339.90px;top:769.36px;font-size:10.8px;line-height:10.8px;font-weight:400;color:#263238;letter-spacing:-0.300px">SCANS</div>
<div class="t" style="left:452.75px;top:768.83px;font-size:11.43px;line-height:11.43px;font-weight:400;color:#263238;letter-spacing:-0.241px">Detection of TCP scans (SYN scan, FIN scan, Xmas scan, Null scan)</div>
<div class="t" style="left:988.40px;width:60px;text-align:right;top:769.19px;font-size:11px;line-height:11px;font-weight:400;color:#263238;">12</div>
<div class="r" style="left:281px;top:790.0px;width:777px;height:28px;background:#f2f5f6;"></div>
<div class="r" style="left:282px;top:817.50px;width:30px;height:1.5px;background:#dbe1e5"></div>
<div class="r" style="left:313px;top:817.50px;width:130px;height:1.5px;background:#dbe1e5"></div>
<div class="r" style="left:444.5px;top:817.50px;width:484px;height:1.5px;background:#dbe1e5"></div>
<div class="r" style="left:929.5px;top:817.50px;width:128.5px;height:1.5px;background:#dbe1e5"></div>
<div class="r" style="left:289px;top:796.75px;width:16.5px;height:14.5px;border-radius:3.5px;background:#fb6316;color:#fff;font-weight:700;font-size:10.5px;line-height:14.5px;text-align:center;letter-spacing:-0.3px">10</div>
<div class="r" style="left:322.2px;top:796.75px;width:13.5px;height:13.5px;border-radius:50%;background:radial-gradient(circle, #fbc02d 50%, #fcd766 100%);color:#111;font-weight:700;font-size:10px;line-height:14px;text-align:center">M</div>
<div class="t" style="left:339.90px;top:798.86px;font-size:10.8px;line-height:10.8px;font-weight:400;color:#263238;letter-spacing:0.114px">ICMPANOM</div>
<div class="t" style="left:452.75px;top:798.33px;font-size:11.43px;line-height:11.43px;font-weight:400;color:#263238;letter-spacing:-0.059px">Detection of anomalies in ICMP traffic</div>
<div class="t" style="left:988.40px;width:60px;text-align:right;top:798.69px;font-size:11px;line-height:11px;font-weight:400;color:#263238;">24</div>
<div class="r" style="left:312.5px;top:524px;width:1px;height:295px;background:#eef1f3;"></div>
<div class="r" style="left:443.5px;top:524px;width:1px;height:295px;background:#eef1f3;"></div>
<div class="r" style="left:928.5px;top:524px;width:1px;height:295px;background:#eef1f3;"></div>
<div class="t" style="left:1077.60px;top:476.36px;font-size:11.75px;line-height:11.75px;font-weight:700;color:#263238;">Overall Network Performance</div>
<div class="t" style="left:1236.40px;width:300px;text-align:right;top:478.02px;font-size:11.8px;line-height:11.8px;font-weight:700;color:#78909c;">Last 24 hours (generic time span)</div>
<svg class="r" style="left:1539.75px;top:480.85px" width="7.5" height="4.3"><path fill="#67808c" d="M0,0 L7.5,0 L3.75,4.3 Z"/></svg>
<svg class="r" style="left:1558.10px;top:475.70px" width="17.00" height="17.00"><path fill="#67808c" fill-rule="evenodd" d="M6.81,4.00 L7.02,2.17 L9.98,2.17 L10.19,4.00 L11.55,4.78 L13.24,4.05 L14.72,6.62 L13.25,7.72 L13.25,9.28 L14.72,10.38 L13.24,12.95 L11.55,12.22 L10.19,13.00 L9.98,14.83 L7.02,14.83 L6.81,13.00 L5.45,12.22 L3.76,12.95 L2.28,10.38 L3.75,9.28 L3.75,7.72 L2.28,6.62 L3.76,4.05 L5.45,4.78 Z M6.36,8.50 a2.15,2.15 0 1,0 4.29,0 a2.15,2.15 0 1,0 -4.29,0 Z"/></svg>
<div class="r" style="left:1277.7px;top:523px;width:7px;height:7px;border-radius:50%;background:#fb8c00"></div>
<div class="t" style="left:1291.20px;top:516.01px;font-size:21.5px;line-height:21.5px;font-weight:700;color:#263238;">97.597<span style="font-weight:700;color:#6f8792;display:inline-block;transform:scaleX(0.8);transform-origin:0 0;-webkit-text-stroke:0.5px #6f8792;margin-left:1px">%</span></div>
<div class="t" style="left:1225.00px;width:200px;text-align:center;top:546.49px;font-size:12.3px;line-height:12.3px;font-weight:400;color:#263238;">Retransmission index</div>
<div class="t" style="left:1080.00px;top:572.15px;font-size:7.5px;line-height:7.5px;font-weight:400;color:#6e828c;">0%</div>
<div class="t" style="left:1183.00px;width:40px;text-align:center;top:572.15px;font-size:7.5px;line-height:7.5px;font-weight:400;color:#6e828c;">90%</div>
<div class="t" style="left:1304.60px;width:40px;text-align:center;top:572.15px;font-size:7.5px;line-height:7.5px;font-weight:400;color:#6e828c;">99%</div>
<div class="t" style="left:1427.00px;width:40px;text-align:center;top:572.15px;font-size:7.5px;line-height:7.5px;font-weight:400;color:#6e828c;">99.9%</div>
<div class="t" style="left:1530.00px;width:40px;text-align:right;top:572.15px;font-size:7.5px;line-height:7.5px;font-weight:400;color:#6e828c;">100%</div>
<div class="r" style="left:1081px;top:585px;width:488px;height:17px;border-radius:3px;background:#e2e6ea;overflow:hidden"><div style="position:absolute;left:0;top:0;bottom:0;width:197px;background:#fb8c00"></div></div>
<div class="r" style="left:1277px;top:580px;width:3px;height:27px;background:#111111;"></div>
<div class="t" style="left:1080.90px;top:609.81px;font-size:8.5px;line-height:8.5px;font-weight:700;color:#37474f;letter-spacing:-0.15px">Poor</div>
<div class="t" style="left:1491.00px;width:80px;text-align:right;top:609.81px;font-size:8.5px;line-height:8.5px;font-weight:700;color:#37474f;letter-spacing:-0.1px">Excellent</div>
<div class="t" style="left:1132.00px;width:190px;text-align:center;top:644.39px;font-size:12.3px;line-height:12.3px;font-weight:400;color:#263238;">AVG RTT</div>
<div class="t" style="left:1132.00px;width:190px;text-align:center;top:671.09px;font-size:14.2px;line-height:14.2px;font-weight:700;color:#263238;">101.275 ms</div>
<div class="t" style="left:1328.00px;width:190px;text-align:center;top:644.39px;font-size:12.3px;line-height:12.3px;font-weight:400;color:#263238;">AVG SRT</div>
<div class="t" style="left:1328.00px;width:190px;text-align:center;top:671.09px;font-size:14.2px;line-height:14.2px;font-weight:700;color:#263238;">248.194 ms</div>
<div class="t" style="left:1132.00px;width:190px;text-align:center;top:716.89px;font-size:12.3px;line-height:12.3px;font-weight:400;color:#263238;">AVG RTR</div>
<div class="t" style="left:1132.00px;width:190px;text-align:center;top:742.99px;font-size:14.2px;line-height:14.2px;font-weight:700;color:#263238;">0.1</div>
<div class="t" style="left:1328.00px;width:190px;text-align:center;top:716.89px;font-size:12.3px;line-height:12.3px;font-weight:400;color:#263238;">AVG jitter</div>
<div class="t" style="left:1328.00px;width:190px;text-align:center;top:742.99px;font-size:14.2px;line-height:14.2px;font-weight:700;color:#263238;">681.951 ms</div>
<div class="t" style="left:1075.00px;top:800.21px;font-size:9.8px;line-height:9.8px;font-weight:400;color:#2f3d44;">2021-08-23 15:21 - 2021-08-24 15:21</div>
</body></html>
